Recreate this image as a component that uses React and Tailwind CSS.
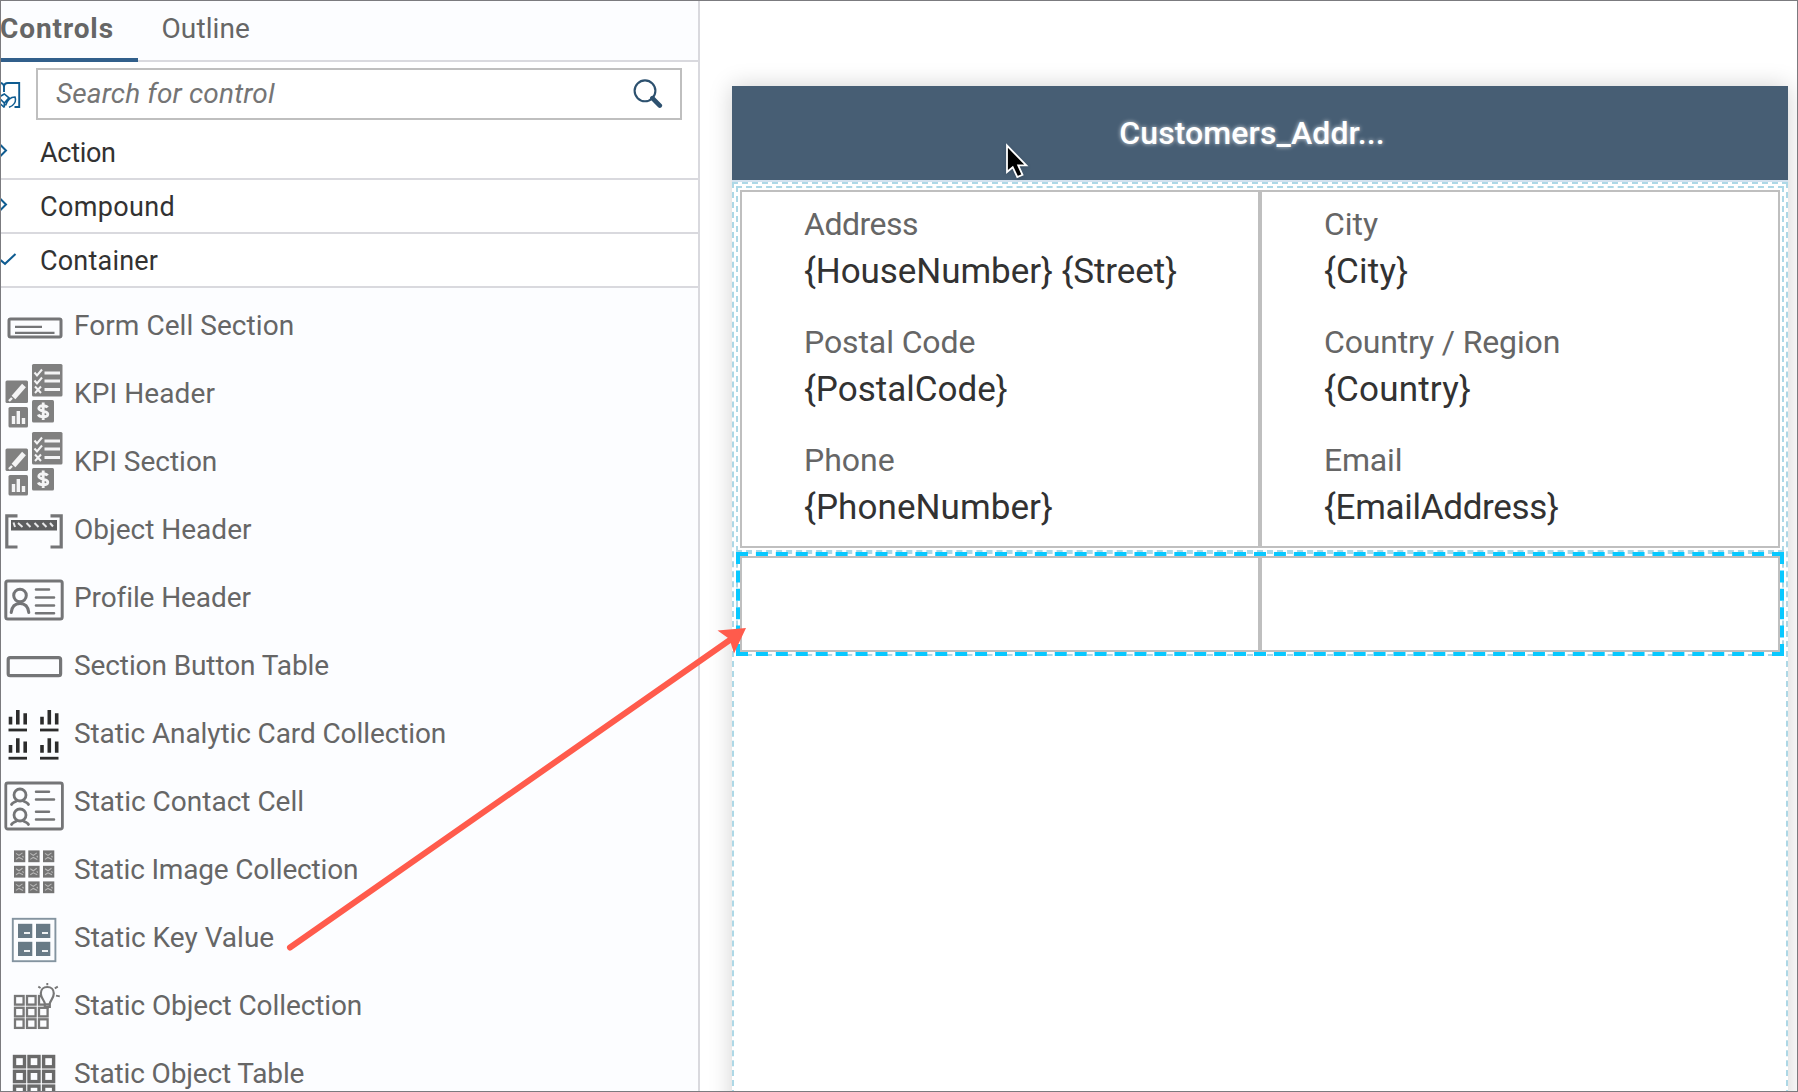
const G = "#747577";
const K = "#808080";

const FormCell = () => (
  <>
    <rect x="9" y="27" width="52" height="18" rx="1.5" fill="none" stroke={G} strokeWidth="3" />
    <path d="M15 34.8H42M15 40.8H54.5" stroke={G} strokeWidth="2.2" />
  </>
);

const Kpi = () => (
  <>
    <g fill={K}>
      <rect x="32" y="4" width="30.5" height="32.5" rx="1.5" />
      <rect x="5.5" y="20.5" width="22.5" height="22.5" rx="1.5" />
      <rect x="32" y="40" width="22" height="22.5" rx="1.5" />
      <rect x="8.5" y="47" width="19.5" height="20.5" rx="1.5" />
    </g>
    <g fill="none" stroke="#f4f4f5">
      <path d="M44.5 13H60M44.5 21H60M44.5 29.5H60" strokeWidth="3" />
      <path d="M34.5 12.5L37 15.5L42 9.5M34.5 20.5L37 23.5L42 17.5M35 26.5L41 33M41 26.5L35 33" strokeWidth="2" />
      <path d="M24 25.5L13.5 37.5" strokeWidth="5" />
      <path d="M9 41L12 38" strokeWidth="2.4" />
      <path d="M47.5 47.5C46.5 45.5 38.5 44.5 38.8 48.5C39 52 47.8 50 47.8 54.2C47.8 58 39.5 57.5 38.3 54.5M43.2 42.5V60" strokeWidth="2.8" />
      <path d="M13.5 64V56M18.3 64V51M23.5 64V58" strokeWidth="3.4" />
    </g>
  </>
);

const ObjectHeader = () => (
  <>
    <path d="M17.5 19.8H6.8V51H17.5M50.5 19.8H61.2V51H50.5" fill="none" stroke={G} strokeWidth="3.2" />
    <rect x="11" y="24" width="46" height="10.5" fill="#5d5e60" />
    <path d="M13.5 26.5L15 31M18 27L22.5 31M26.5 27L30.5 31M34.5 27L38.5 31M42.5 27L46.5 31M50 27L53 30.5" stroke="#e8e8ea" strokeWidth="2" />
  </>
);

const ProfileHeader = () => (
  <g fill="none" stroke={G} strokeWidth="3" strokeLinecap="round">
    <rect x="5.8" y="17" width="56.4" height="38" rx="2" />
    <circle cx="20" cy="31.5" r="6.3" />
    <path d="M11.2 48.5C12 41.5 16 39.5 20 39.5S28 41.5 28.8 48.5" />
    <path d="M36 25.5H49M36 33.5H54M36 41.5H54M36 49.2H54" strokeWidth="2.6" />
  </g>
);

const ButtonTable = () => (
  <rect x="8.2" y="25.7" width="52.4" height="18" rx="2" fill="none" stroke={G} strokeWidth="3.2" />
);

const AnalyticCards = () => (
  <g stroke="#2c2c2c" fill="none">
    {[[8.5, 0], [40, 0], [8.5, 28.2], [40, 28.2]].map(([x, y]) => (
      <g key={x + "-" + y} transform={`translate(${x} ${y})`}>
        <path d="M0 30H18.5" strokeWidth="2.8" />
        <path d="M2 24.5V16.8M9.3 24.5V10M16.7 24.5V13.3" strokeWidth="3.6" />
      </g>
    ))}
  </g>
);

const ContactCell = () => (
  <g fill="none" stroke={G} strokeWidth="2.8" strokeLinecap="round">
    <rect x="5.8" y="15" width="56.6" height="46" rx="2" />
    {[0, 20].map((y) => (
      <g key={y} transform={`translate(0 ${y})`}>
        <circle cx="20" cy="27" r="6" />
        <path d="M11.5 36.5C12 35 14 34 16.3 33.2M28.5 36.5C28 35 26 34 23.7 33.2" />
        <path d="M36 23.7H49M36 31.4H54" strokeWidth="2.5" />
      </g>
    ))}
  </g>
);

const ImageTiles = () =>
  [14.4, 29.8, 45.4].map((y) =>
    [14, 28.3, 43].map((x) => (
      <g key={x + "-" + y} transform={`translate(${x} ${y})`}>
        <rect width="11.3" height="11.8" fill="#747474" />
        <path d="M2 3L5 5L8.5 2.5M2 9L5 7L9 9M8.5 5.5L9.5 7" fill="none" stroke="#b9b9b9" strokeWidth="1.1" />
      </g>
    ))
  );

const KeyValue = () => (
  <>
    <rect x="12.8" y="14.8" width="42.6" height="42.4" fill="none" stroke="#8494a0" strokeWidth="1.9" />
    {[19.8, 37.8].map((y) =>
      [18, 36].map((x) => (
        <g key={x + "-" + y} transform={`translate(${x} ${y})`}>
          <rect width="14.3" height="14.2" fill="#687a86" />
          <path d="M6 9.2H12" stroke="#fff" strokeWidth="1.8" />
        </g>
      ))
    )}
  </>
);

const ObjectCollection = () => (
  <g fill="none" stroke="#777">
    {[24, 35.8, 47.3].map((y) =>
      [15, 27, 39].map((x) => <rect key={x + "-" + y} x={x} y={y} width="8.6" height="8.6" strokeWidth="2.3" />)
    )}
    <path d="M44.8 35V31.5C44.5 28.5 40.8 26 40.8 21.5C40.8 17.5 43.5 15 47.3 15S53.8 17.5 53.8 21.5C53.8 26 50.2 28.5 49.8 31.5V35Z" fill="#fcfdff" strokeWidth="2.2" />
    <path d="M44.8 32.5H49.8M46 35.6H48.6" strokeWidth="2.4" />
    <path d="M47.3 11V13.2M38.3 14.6L40.6 16M57.8 14.6L54.8 16.4M56 23.6L59.8 24.4" strokeWidth="1.9" />
  </g>
);

const ObjectTable = () => (
  <g fill="none" stroke="#6a6a6a" strokeWidth="3.4">
    {[16.5, 31.3, 46.1].map((y) =>
      [14.5, 29, 43.6].map((x) => <rect key={x + "-" + y} x={x} y={y} width="10" height="10.3" />)
    )}
  </g>
);

const CONTROLS = [
  ["Form Cell Section", FormCell, "tracking-[0.05px]"],
  ["KPI Header", Kpi, "tracking-[0.1px]"],
  ["KPI Section", Kpi, "tracking-[0px]"],
  ["Object Header", ObjectHeader, "tracking-[0px]"],
  ["Profile Header", ProfileHeader, "tracking-[-0.1px]"],
  ["Section Button Table", ButtonTable, "tracking-[-0.1px]"],
  ["Static Analytic Card Collection", AnalyticCards, "tracking-[-0.1px]"],
  ["Static Contact Cell", ContactCell, "tracking-[0px]"],
  ["Static Image Collection", ImageTiles, "tracking-[-0.17px]"],
  ["Static Key Value", KeyValue, "tracking-[0px]"],
  ["Static Object Collection", ObjectCollection, "tracking-[-0.1px]"],
  ["Static Object Table", ObjectTable, "tracking-[-0.15px]"],
];

const GROUPS = [
  ["Action", "M0 18.5L6 24.5L0 30.5", "tracking-[-0.3px]"],
  ["Compound", "M0 18.5L6 24.5L0 30.5", "tracking-[0.35px]"],
  ["Container", "M-2 24L5 29.8L15.5 20", "tracking-[0.2px]"],
];

const COLUMNS = [
  [
    ["Address", "{HouseNumber} {Street}", "tracking-[-0.5px]", "tracking-[-0.06px]"],
    ["Postal Code", "{PostalCode}", "tracking-[-0.1px]", "tracking-[0px]"],
    ["Phone", "{PhoneNumber}", "tracking-[0px]", "tracking-[0.08px]"],
  ],
  [
    ["City", "{City}", "tracking-[0px]", "tracking-[0.2px]"],
    ["Country / Region", "{Country}", "tracking-[-0.15px]", "tracking-[0.2px]"],
    ["Email", "{EmailAddress}", "tracking-[-0.2px]", "tracking-[-0.3px]"],
  ],
];

function Sidebar() {
  return (
    <aside className="flex h-full w-[700px] shrink-0 flex-col overflow-hidden border-r-2 border-[#d9d9de] bg-[#fcfdff]">
      <div className="flex h-[62px] shrink-0 border-b-2 border-[#d9d9de] text-[28px] leading-[57px] text-[#666]">
        <div className="h-[62px] w-[138px] border-b-4 border-[#315f8b] font-bold tracking-[0.9px]">Controls</div>
        <div className="pl-[23.5px] tracking-[0.1px]">Outline</div>
      </div>
      <div className="flex h-16 shrink-0 items-start bg-white pt-1.5">
        <svg className="h-[52px] w-9 shrink-0" viewBox="0 68 36 52" fill="none" stroke="#0f5c91" strokeWidth="1.9">
          <path d="M0 83C2.5 83 4 84.5 4 87V92M4 87C4 84.5 5.5 83 8 83H19.2V107H14.5" />
          <path d="M0 96.5L4.3 94L9 97.8L4.3 103L0 98.8M4.3 103V107.5M0 103.5L4.3 107.5M5.5 105.5C7.5 99.5 10.5 97 15 97C16.5 101.5 14 105.5 9 107.3" strokeWidth="1.6" />
        </svg>
        <div className="flex h-[52px] w-[646px] items-center justify-between border-2 border-[#bfbfbf] bg-white pl-[18px] pr-[17px]">
          <span className="text-[28px] italic leading-none tracking-[0.15px] text-[#757575]">Search for control</span>
          <svg className="h-8 w-8" viewBox="631 78 32 32" fill="none" stroke="#2d516f">
            <circle cx="645" cy="90.8" r="10.4" strokeWidth="2.1" />
            <path d="M652.4 98.2L659.8 105.6" strokeWidth="4.6" strokeLinecap="round" />
          </svg>
        </div>
      </div>
      {GROUPS.map(([name, d, tracking]) => (
        <div key={name} className="flex h-[54px] shrink-0 items-center border-b-2 border-[#d9d9de] bg-white">
          <svg className="h-[52px] w-10 shrink-0" viewBox="0 0 40 52" fill="none" stroke="#0f5c91" strokeWidth="2">
            <path d={d} />
          </svg>
          <span className={"pt-0.5 text-[27px] leading-none text-[#323232] " + tracking}>{name}</span>
        </div>
      ))}
      <ul className="shrink-0 pt-1">
        {CONTROLS.map(([name, Icon, tracking]) => (
          <li key={name} className="flex h-[68px] items-center">
            <svg className="h-[68px] w-[74px] shrink-0" viewBox="0 0 74 68">
              <Icon />
            </svg>
            <span className={"text-[28px] leading-none text-[#666] " + tracking}>{name}</span>
          </li>
        ))}
      </ul>
    </aside>
  );
}

function Preview() {
  return (
    <main className="h-full min-w-0 flex-1 overflow-hidden bg-white pl-8 pt-[86px]">
      <div className="flex h-[1040px] w-[1056px] flex-col bg-white shadow-[0_0_22px_rgba(0,0,0,0.18)]">
        <header className="flex h-[94px] shrink-0 items-center justify-center bg-[#475e74] pr-4 text-[32px] font-medium tracking-[0.1px] text-white [text-shadow:0_0_4px_rgba(255,255,255,0.75)]">
          Customers_Addr...
        </header>
        <div className="h-0.5 shrink-0 bg-[#d3e2ef]" />
        <div className="flex-1 border-2 border-dashed border-[#add8e6] p-0.5">
          <section className="border-2 border-dashed border-[#add8e6] p-0.5">
            <div className="grid h-[358px] grid-cols-2">
              {COLUMNS.map((fields) => (
                <div key={fields[0][0]} className="flex flex-col gap-[23px] border-2 border-[#bfbfbf] pl-[62px] pt-2.5">
                  {fields.map(([label, value, lt, vt]) => (
                    <div key={label}>
                      <div className={"text-[32px] leading-[45px] text-[#666] " + lt}>{label}</div>
                      <div className={"whitespace-nowrap text-[35px] leading-[50px] text-[#323232] " + vt}>{value}</div>
                    </div>
                  ))}
                </div>
              ))}
            </div>
          </section>
          <section className="relative border-2 border-dashed border-[#add8e6] p-0.5">
            <div className="grid h-24 grid-cols-2">
              <div className="border-2 border-[#bfbfbf]" />
              <div className="border-2 border-[#bfbfbf]" />
            </div>
            <div className="absolute -left-0.5 -top-0.5 h-[52px] w-[524px] origin-top-left scale-200 border-2 border-dashed border-[#08c8ff]" />
          </section>
        </div>
      </div>
    </main>
  );
}

export default function App() {
  return (
    <div className="relative flex h-[1092px] w-[1798px] overflow-hidden bg-white font-['Roboto',sans-serif]">
      <Sidebar />
      <Preview />
      <svg className="pointer-events-none absolute left-[280px] top-[620px]" width="480" height="340" viewBox="280 620 480 340">
        <path d="M290 947.5L732 638.5" stroke="#ff5b4c" strokeWidth="6" strokeLinecap="round" />
        <path d="M746 628L717.5 630.5L729.5 639L734 653.5Z" fill="#ff5b4c" />
      </svg>
      <svg className="pointer-events-none absolute left-[1000px] top-[138px] drop-shadow" width="36" height="48" viewBox="1000 138 36 48">
        <path d="M1007 145.5V172L1012.7 167.2L1017.3 177L1022.5 174.8L1018.2 165.3H1026.3Z" fill="#000" stroke="#fff" strokeWidth="1.8" />
      </svg>
      <div className="pointer-events-none absolute inset-0 border border-[#7b7b7f]" />
    </div>
  );
}
